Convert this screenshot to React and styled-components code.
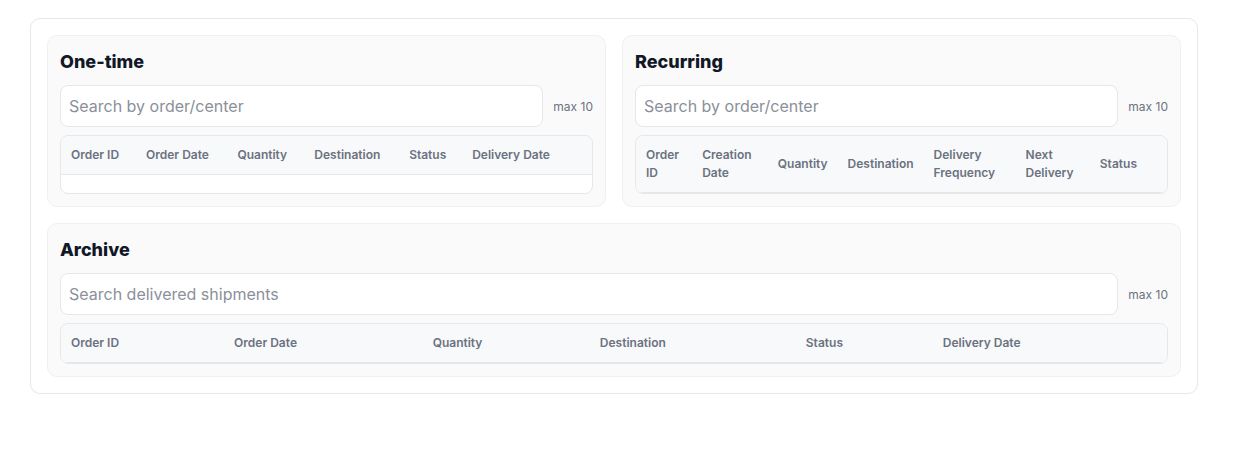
import React from "react";
import styled, { createGlobalStyle } from "styled-components";

const Global = createGlobalStyle`
  html, body { margin: 0; padding: 0; background: #ffffff; }
  body { font-family: Inter, "Noto Sans", "Liberation Sans", sans-serif; color: #111827; }
  * { box-sizing: border-box; }
`;

const Card = styled.div`
  width: 1168px;
  margin: 18px 0 0 30px;
  border: 1px solid #e5e7eb;
  border-radius: 10px;
  padding: 16px;
  display: flex;
  flex-direction: column;
  gap: 16px;
  background: #ffffff;
`;

const TopRow = styled.div`
  display: grid;
  grid-template-columns: 1fr 1fr;
  gap: 16px;
`;

const Section = styled.section`
  background: #fafafa;
  border: 1px solid #f0f0f1;
  border-radius: 10px;
  padding: 12px;
  display: flex;
  flex-direction: column;
`;

const Title = styled.h2`
  margin: 0;
  font-size: 18px;
  line-height: 27px;
  font-weight: 800;
  color: #111827;
`;

const SearchRow = styled.div`
  display: flex;
  align-items: center;
  gap: 10px;
  margin-top: 10px;
`;

const Search = styled.input`
  flex: 1;
  height: 42px;
  border: 1px solid #e5e7eb;
  border-radius: 8px;
  background: #ffffff;
  padding: 0 8px;
  font-family: inherit;
  font-size: 16px;
  color: #111827;
  outline: none;
  &::placeholder { color: #8b9099; }
`;

const Max = styled.span`
  font-size: 12px;
  color: #6b7280;
  white-space: nowrap;
`;

const TableWrap = styled.div`
  margin-top: 8px;
  border: 1px solid #e5e7eb;
  border-radius: 8px;
  overflow: hidden;
  background: #ffffff;
`;

const Table = styled.table`
  width: 100%;
  border-collapse: collapse;
`;

const Th = styled.th`
  text-align: left;
  font-size: 12px;
  line-height: 18px;
  font-weight: 600;
  color: #6b7280;
  padding: 10px;
  background: #f8f9fb;
  border-bottom: 1px solid #e5e7eb;
  vertical-align: middle;
`;

const EmptyCell = styled.td`
  height: 18px;
  padding: 0;
`;

const Panel = ({ title, placeholder, columns, actions, emptyRow }) => {
  const count = columns.length + (actions ? 1 : 0);
  return (
    <Section>
      <Title>{title}</Title>
      <SearchRow>
        <Search placeholder={placeholder} />
        <Max>max 10</Max>
      </SearchRow>
      <TableWrap>
        <Table>
          <thead>
            <tr>
              {columns.map((c) => (
                <Th key={c}>{c}</Th>
              ))}
              {actions && <Th aria-label="actions" />}
            </tr>
          </thead>
          {emptyRow && (
            <tbody>
              <tr>
                <EmptyCell colSpan={count} />
              </tr>
            </tbody>
          )}
        </Table>
      </TableWrap>
    </Section>
  );
};

export default function App() {
  return (
    <>
      <Global />
      <Card>
        <TopRow>
          <Panel
            title="One-time"
            placeholder="Search by order/center"
            columns={["Order ID", "Order Date", "Quantity", "Destination", "Status", "Delivery Date"]}
            actions
            emptyRow
          />
          <Panel
            title="Recurring"
            placeholder="Search by order/center"
            columns={["Order ID", "Creation Date", "Quantity", "Destination", "Delivery Frequency", "Next Delivery", "Status"]}
            actions
          />
        </TopRow>
        <Panel
          title="Archive"
          placeholder="Search delivered shipments"
          columns={["Order ID", "Order Date", "Quantity", "Destination", "Status", "Delivery Date"]}
        />
      </Card>
    </>
  );
}
